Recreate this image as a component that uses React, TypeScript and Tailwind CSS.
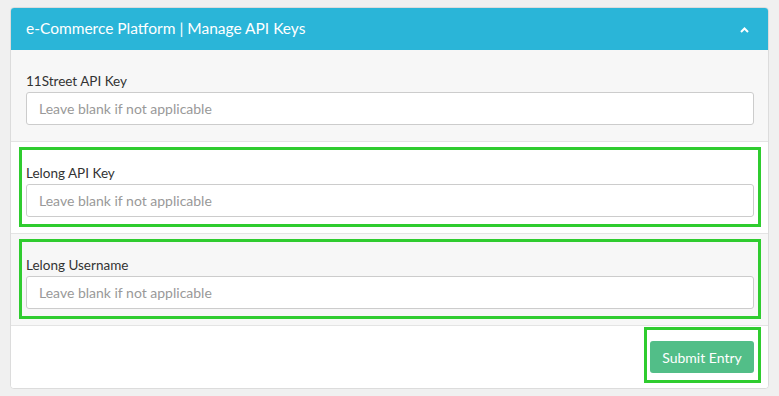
const fields = [
  { label: "11Street API Key", bg: "bg-[#f7f7f7]", marked: false },
  { label: "Lelong API Key", bg: "bg-white", marked: true },
  { label: "Lelong Username", bg: "bg-[#f7f7f7]", marked: true },
];

export default function App() {
  return (
    <div className="min-h-screen bg-[#f0f0f0] pt-[7px] px-[10px] font-['Lato',sans-serif]">
      <div className="w-[759px] rounded-[4px] border border-[#dcdcdc] overflow-hidden bg-white">
        {/* header */}
        <div className="h-[43px] -mx-px -mt-px bg-[#2ab5d8] flex items-center justify-between pl-[16px] pr-[20px]">
          <h2 className="text-[15.5px] text-white">e-Commerce Platform | Manage API Keys</h2>
          <svg width="9" height="6" viewBox="0 0 9 6" className="mt-[2px]">
            <path d="M1 5 L4.5 1.5 L8 5" stroke="white" strokeWidth="2" fill="none" />
          </svg>
        </div>

        {fields.map((f) => (
          <div
            key={f.label}
            className={`${f.bg} border-b border-[#e4e4e4] pl-[8px] pr-[7px] pt-[5px] pb-[6px]`}
          >
            <div
              className={`border-[3px] px-[4px] pt-[14px] pb-[7px] ${
                f.marked ? "border-[#2fcc2f]" : "border-transparent"
              }`}
            >
              <label className="block text-[13.5px] leading-[19px] mb-px text-[#333]">{f.label}</label>
              <input
                placeholder="Leave blank if not applicable"
                className="w-full h-[33px] rounded-[3px] border border-[#cccccc] bg-white px-[12px] text-[14px] text-[#333] placeholder:text-[#999] outline-none"
              />
            </div>
          </div>
        ))}

        {/* footer */}
        <div className="flex justify-end pr-[7px] pt-[1px] pb-[5px] bg-white">
          <div className="border-[3px] border-[#2fcc2f] pt-[11px] pb-[7px] pl-[3px] pr-[4px]">
            <button className="h-[32px] w-[104px] rounded-[3px] bg-[#52be88] text-white text-[14px]">
              Submit Entry
            </button>
          </div>
        </div>
      </div>
    </div>
  );
}
